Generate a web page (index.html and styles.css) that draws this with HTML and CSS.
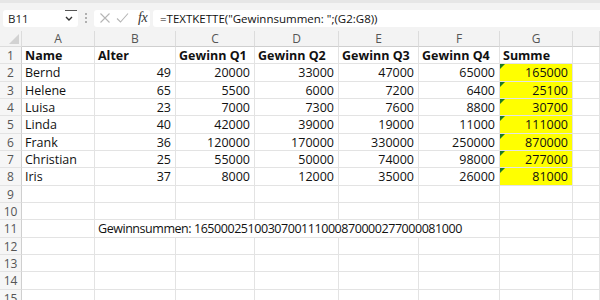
FILE: index.html
```html
<!DOCTYPE html>
<html lang="de">
<head>
<meta charset="utf-8">
<title>Excel TEXTKETTE</title>
<link rel="stylesheet" href="styles.css">
</head>
<body>
<div class="app">
  <div class="fbar">
    <div class="namebox"><span class="nb-text">B11</span>
      <svg class="chev" width="8" height="5" viewBox="0 0 8 5"><path d="M1 1 L4 4 L7 1" fill="none" stroke="#333" stroke-width="1.4"/></svg>
    </div>
    <div class="dots"><i></i><i></i><i></i></div>
    <div class="fxbox">
      <svg width="12" height="12" viewBox="0 0 12 12"><path d="M1.5 1.5 L10.5 10.5 M10.5 1.5 L1.5 10.5" stroke="#b5b5b5" stroke-width="1.1" fill="none"/></svg>
      <svg width="13" height="12" viewBox="0 0 13 12"><path d="M1 6.5 L4.5 10 L12 1.5" stroke="#b5b5b5" stroke-width="1.1" fill="none"/></svg>
      <span class="fx">fx</span>
    </div>
    <div class="formula">=TEXTKETTE("Gewinnsummen: ";(G2:G8))</div>
  </div>
  <div class="sheet">
    <div class="corner"><span class="tri"></span></div>
    <div class="ch">A</div><div class="ch">B</div><div class="ch">C</div><div class="ch">D</div><div class="ch">E</div><div class="ch">F</div><div class="ch">G</div><div class="ch"></div>

    <div class="rh">1</div><div class="c b">Name</div><div class="c b">Alter</div><div class="c b">Gewinn Q1</div><div class="c b">Gewinn Q2</div><div class="c b">Gewinn Q3</div><div class="c b">Gewinn Q4</div><div class="c b">Summe</div><div class="c"></div>

    <div class="rh">2</div><div class="c">Bernd</div><div class="c n">49</div><div class="c n">20000</div><div class="c n">33000</div><div class="c n">47000</div><div class="c n">65000</div><div class="c n y">165000</div><div class="c"></div>
    <div class="rh">3</div><div class="c">Helene</div><div class="c n">65</div><div class="c n">5500</div><div class="c n">6000</div><div class="c n">7200</div><div class="c n">6400</div><div class="c n y">25100</div><div class="c"></div>
    <div class="rh">4</div><div class="c">Luisa</div><div class="c n">23</div><div class="c n">7000</div><div class="c n">7300</div><div class="c n">7600</div><div class="c n">8800</div><div class="c n y">30700</div><div class="c"></div>
    <div class="rh">5</div><div class="c">Linda</div><div class="c n">40</div><div class="c n">42000</div><div class="c n">39000</div><div class="c n">19000</div><div class="c n">11000</div><div class="c n y">111000</div><div class="c"></div>
    <div class="rh">6</div><div class="c">Frank</div><div class="c n">36</div><div class="c n">120000</div><div class="c n">170000</div><div class="c n">330000</div><div class="c n">250000</div><div class="c n y">870000</div><div class="c"></div>
    <div class="rh">7</div><div class="c">Christian</div><div class="c n">25</div><div class="c n">55000</div><div class="c n">50000</div><div class="c n">74000</div><div class="c n">98000</div><div class="c n y">277000</div><div class="c"></div>
    <div class="rh">8</div><div class="c">Iris</div><div class="c n">37</div><div class="c n">8000</div><div class="c n">12000</div><div class="c n">35000</div><div class="c n">26000</div><div class="c n y">81000</div><div class="c"></div>

    <div class="rh">9</div><div class="c"></div><div class="c"></div><div class="c"></div><div class="c"></div><div class="c"></div><div class="c"></div><div class="c"></div><div class="c"></div>
    <div class="rh">10</div><div class="c"></div><div class="c"></div><div class="c"></div><div class="c"></div><div class="c"></div><div class="c"></div><div class="c"></div><div class="c"></div>
    <div class="rh">11</div><div class="c"></div><div class="c span5">Gewinnsummen: 1650002510030700111000870000277000081000</div><div class="c"></div><div class="c"></div>
    <div class="rh">12</div><div class="c"></div><div class="c"></div><div class="c"></div><div class="c"></div><div class="c"></div><div class="c"></div><div class="c"></div><div class="c"></div>
    <div class="rh">13</div><div class="c"></div><div class="c"></div><div class="c"></div><div class="c"></div><div class="c"></div><div class="c"></div><div class="c"></div><div class="c"></div>
    <div class="rh">14</div><div class="c"></div><div class="c"></div><div class="c"></div><div class="c"></div><div class="c"></div><div class="c"></div><div class="c"></div><div class="c"></div>
    <div class="rh">15</div><div class="c"></div><div class="c"></div><div class="c"></div><div class="c"></div><div class="c"></div><div class="c"></div><div class="c"></div><div class="c"></div>
  </div>
</div>
</body>
</html>
```

FILE: styles.css
```css
* { box-sizing: border-box; }
html, body { margin: 0; padding: 0; }
body {
  width: 600px;
  height: 300px;
  overflow: hidden;
  background: #ffffff;
  font-family: "Open Sans", "Noto Sans", sans-serif;
}
.app { display: flex; flex-direction: column; }

.fbar {
  height: 31px;
  background: #f3f3f3;
  border-top: 3px solid #e6e6e6;
  display: flex;
  align-items: center;
  padding: 2px 0 0 3px;
}
.namebox {
  position: relative;
  width: 75px;
  height: 17px;
  background: #fff;
  border-radius: 3px;
  display: flex;
  align-items: center;
  justify-content: space-between;
  padding: 0 5px 0 5px;
  font-size: 11.5px;
  color: #222;
}
.namebox::before {
  content: "";
  position: absolute;
  top: 0;
  right: 1px;
  width: 12px;
  height: 1px;
  background: #555;
}
.chev { margin-top: 1px; }
.dots {
  width: 16px;
  display: flex;
  flex-direction: column;
  align-items: center;
  gap: 2px;
}
.dots i {
  display: block;
  width: 2px;
  height: 2px;
  background: #9a9a9a;
  border-radius: 1px;
}
.fxbox {
  width: 56px;
  height: 17px;
  background: #fff;
  border-radius: 3px;
  display: flex;
  align-items: center;
  gap: 5px;
  padding-left: 5px;
}
.fx {
  font-family: "Liberation Serif", serif;
  font-style: italic;
  font-size: 14px;
  color: #333;
  margin-left: 4px;
  letter-spacing: -0.5px;
}
.formula {
  flex: 1;
  height: 17px;
  margin-left: 3px;
  background: #fff;
  border-radius: 3px 0 0 3px;
  font-size: 11.5px;
  line-height: 17px;
  padding-left: 7px;
  color: #111;
}

.sheet {
  display: grid;
  grid-template-columns: 22px 73px 81px 79px 84px 80px 81px 73px 1fr;
  grid-template-rows: 16px;
  grid-auto-rows: 17.33px;
  font-size: 12.5px;
  color: #111;
}
.corner {
  position: relative;
  background: #f3f3f3;
  border-right: 1px solid #dcdcdc;
  border-bottom: 1px solid #dcdcdc;
}
.tri {
  position: absolute;
  right: 2px;
  bottom: 2px;
  width: 0;
  height: 0;
  border-left: 10px solid transparent;
  border-bottom: 10px solid #d2d2d2;
}
.ch {
  background: #f3f3f3;
  border-right: 1px solid #dcdcdc;
  border-bottom: 1px solid #cfcfcf;
  text-align: center;
  font-size: 12px;
  line-height: 16px;
  color: #555;
}
.rh {
  background: #f6f6f6;
  border-right: 1px solid #cfcfcf;
  border-bottom: 1px solid #e3e3e3;
  text-align: center;
  font-size: 12px;
  line-height: 17px;
  color: #555;
}
.c {
  position: relative;
  border-right: 1px solid #e3e3e3;
  border-bottom: 1px solid #e3e3e3;
  padding: 0 3px;
  line-height: 17px;
  white-space: nowrap;
}
.b { font-weight: 700; }
.n { text-align: right; padding-right: 4px; }
.y { background: #ffff00; }
.y::before {
  content: "";
  position: absolute;
  top: 0;
  left: 0;
  width: 0;
  height: 0;
  border-top: 5px solid #1f7a24;
  border-right: 5px solid transparent;
}
.span5 { grid-column: span 5; letter-spacing: -0.45px; }
```
